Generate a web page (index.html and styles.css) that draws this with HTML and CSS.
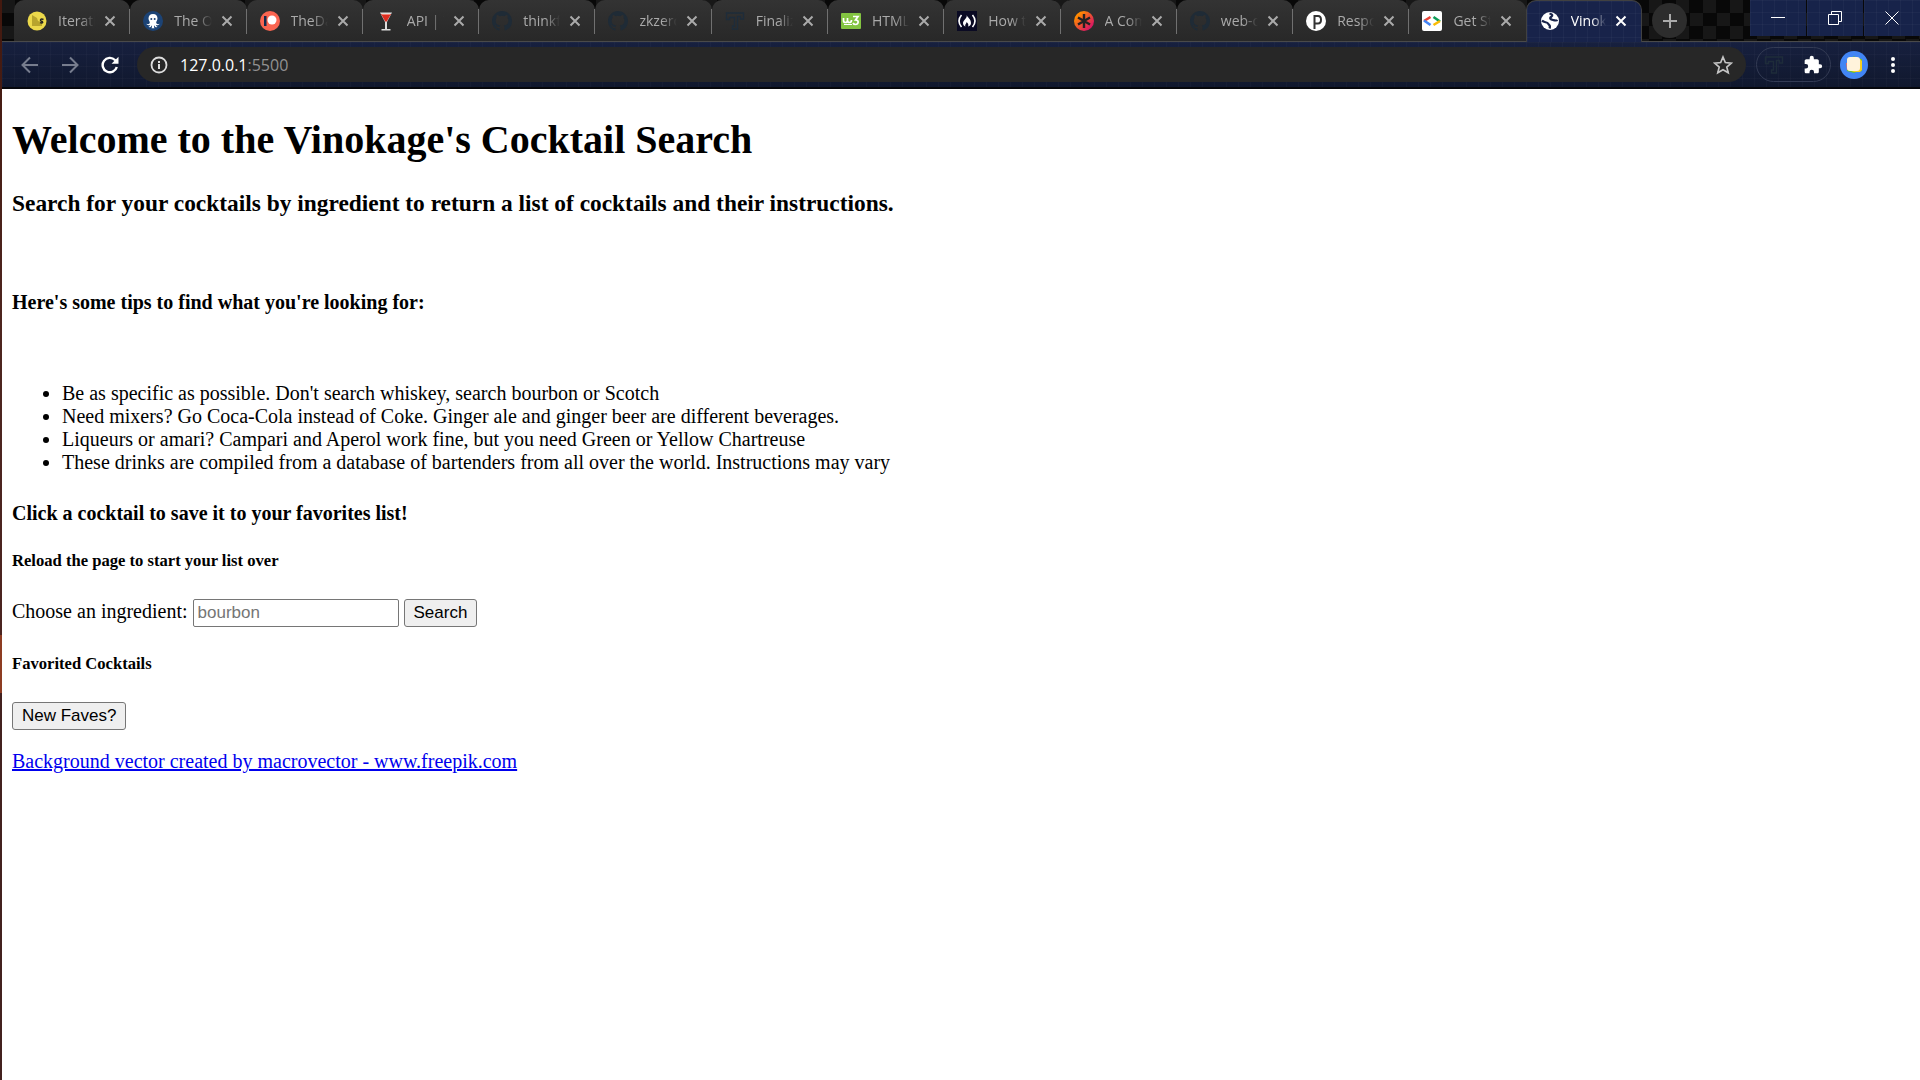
FILE: index.html
```html
<!DOCTYPE html>
<html lang="en">
<head>
<meta charset="utf-8">
<title>Vinokage's Cocktail Search</title>
<link rel="stylesheet" href="styles.css">
</head>
<body>
<svg class="defs" aria-hidden="true">
  <symbol id="close" viewBox="0 0 12 12"><path d="M1.5 1.5l9 9M10.500 1.500l-9 9" fill="none" stroke="currentColor" stroke-width="2"/></symbol>
  <symbol id="github" viewBox="0 0 16 16"><path fill="#1f2b36" d="M8 0C3.580 0 0 3.580 0 8c0 3.540 2.290 6.530 5.470 7.590.4.070.55-.17.55-.38v-1.490c-2.010.37-2.530-.49-2.690-.94-.09-.23-.48-.94-.82-1.130-.28-.15-.68-.52-.01-.53.63-.01 1.080.58 1.230.82.72 1.210 1.870.87 2.330.66.070-.52.280-.87.510-1.070-1.780-.2-3.640-.89-3.640-3.950 0-.87.31-1.590.82-2.150-.08-.2-.36-1.020.08-2.120 0 0 .67-.21 2.200.82a7.600 7.600 0 0 1 4 0c1.530-1.040 2.200-.82 2.200-.82.44 1.100.16 1.920.08 2.120.51.56.82 1.270.82 2.150 0 3.070-1.870 3.750-3.650 3.950.29.25.54.73.54 1.480v2.200c0 .21.15.46.55.38A8 8 0 0 0 16 8c0-4.420-3.580-8-8-8z"/></symbol>
  <symbol id="tee" viewBox="0 0 20 20"><path d="M1.500 2h17v6h-3V5.500h-3V18h-5v-3h2V6.500h-5V8.500h-3z" fill="none" stroke="currentColor" stroke-width="1.400"/></symbol>
</svg>
<div class="window">
  <header class="browser">
    <div class="strip">
      <div class="tabs">
        <div class="tab"><svg class="icon" viewBox="0 0 20 20"><circle cx="10" cy="10" r="9.500" fill="#ecd94b"/><path d="M5 4l5 3 1 3 4 1v4H5z" fill="#b8a52d"/><path d="M16.500 8.500c-3-1.500-4 1.200-2 1.700s1.500 2.600-1.500 1.400" fill="none" stroke="#222" stroke-width="1.400"/></svg><span class="title">Iterating</span><button class="close" aria-label="Close tab"><svg><use href="#close"/></svg></button></div>
        <div class="tab"><svg class="icon" viewBox="0 0 20 20"><circle cx="10" cy="10" r="10" fill="#1c4375"/><path d="M10 3c-3 0-4.500 2-4.500 4.500 0 2 1.500 3 1.300 4.300S5 13.500 3.500 12.800c.5 1.700 2.500 1.700 3.700.9-.2 1.500-1.200 2-2 2.100 1.500 1 3 .2 3.700-1.600.2 1.300.1 2.300-.5 3h3.200c-.6-.7-.7-1.700-.5-3 .7 1.800 2.200 2.600 3.700 1.600-.8-.1-1.800-.6-2-2.100 1.200.8 3.200.8 3.700-.9-1.500.7-3.100.3-3.300-1s1.300-2.300 1.300-4.300C14.500 5 13 3 10 3z" fill="#fff"/><circle cx="8.300" cy="8" r="1" fill="#1c4375"/><circle cx="11.700" cy="8" r="1" fill="#1c4375"/></svg><span class="title">The Odin</span><button class="close" aria-label="Close tab"><svg><use href="#close"/></svg></button></div>
        <div class="tab"><svg class="icon" viewBox="0 0 20 20"><circle cx="10" cy="10" r="10" fill="#fa6550"/><path d="M4 5h2.500v10H4z" fill="#122b4d"/><circle cx="12" cy="9" r="4.500" fill="#fff"/></svg><span class="title">TheDaily</span><button class="close" aria-label="Close tab"><svg><use href="#close"/></svg></button></div>
        <div class="tab"><svg class="icon" viewBox="0 0 20 20"><path d="M4 1.500h12L11 11v7h3.500v1.500h-9V18H9v-7z" fill="#ddd"/><path d="M5 3h10l-4.200 7.500H9.200z" fill="#dc2d20"/><path d="M6 3.500h8" stroke="#f58173"/></svg><span class="title">API | The</span><button class="close" aria-label="Close tab"><svg><use href="#close"/></svg></button></div>
        <div class="tab"><svg class="icon"><use href="#github"/></svg><span class="title">thinkful</span><button class="close" aria-label="Close tab"><svg><use href="#close"/></svg></button></div>
        <div class="tab"><svg class="icon"><use href="#github"/></svg><span class="title">zkzero/a</span><button class="close" aria-label="Close tab"><svg><use href="#close"/></svg></button></div>
        <div class="tab"><svg class="icon tee"><use href="#tee"/></svg><span class="title">Finalize</span><button class="close" aria-label="Close tab"><svg><use href="#close"/></svg></button></div>
        <div class="tab"><svg class="icon" viewBox="0 0 20 20"><rect y="2" width="20" height="16" rx="1" fill="#83c441"/><path d="M2.500 7v2.500q0 2 2 2T6.500 9V7v2.500q0 2 2 2t2-2.500M12 5.500h5L14.500 9c4 0 3 4.500 0 4.500-1.500 0-2-.5-2.500-1.500" fill="none" stroke="#fff" stroke-width="1.700"/><path d="M3 13.500h8" stroke="#fff"/></svg><span class="title">HTML C</span><button class="close" aria-label="Close tab"><svg><use href="#close"/></svg></button></div>
        <div class="tab"><svg class="icon" viewBox="0 0 20 20"><path d="M0 0h20v20H0z" fill="#0a0a23"/><path d="M4.500 4q-5 6 0 12M15.500 4q5 6 0 12" fill="none" stroke="#fff" stroke-width="1.600"/><path d="M9.500 4c1.500 3-3.500 5-3.500 8 0 2 1 3 2.500 3.500-1-2 1-2.500 1-4.500 1.500 1 2.500 3 1.500 4.500 2-.5 3-1.700 3-3.500 0-4-3-5-4.500-8z" fill="#fff"/></svg><span class="title">How to</span><button class="close" aria-label="Close tab"><svg><use href="#close"/></svg></button></div>
        <div class="tab"><svg class="icon" viewBox="0 0 20 20"><linearGradient id="star-fill" x1="0" y1="0" x2="1" y2="1"><stop offset=".2" stop-color="#ff8a00"/><stop offset=".8" stop-color="#da1b60"/></linearGradient><circle cx="10" cy="10" r="10" fill="url(#star-fill)"/><path d="M10 3v14M4 6.500l12 7M16 6.500l-12 7" stroke="#222" stroke-width="2.400"/></svg><span class="title">A Comp</span><button class="close" aria-label="Close tab"><svg><use href="#close"/></svg></button></div>
        <div class="tab"><svg class="icon"><use href="#github"/></svg><span class="title">web-dev</span><button class="close" aria-label="Close tab"><svg><use href="#close"/></svg></button></div>
        <div class="tab"><svg class="icon" viewBox="0 0 20 20"><circle cx="10" cy="10" r="10" fill="#fff"/><path d="M8.500 18V5h3.500c4 0 4 7.500 0 7.500H8.500" fill="none" stroke="#333" stroke-width="2"/></svg><span class="title">Respons</span><button class="close" aria-label="Close tab"><svg><use href="#close"/></svg></button></div>
        <div class="tab"><svg class="icon" viewBox="0 0 20 20"><rect width="20" height="20" rx="2" fill="#fff"/><g fill="none" stroke-width="2.600"><path d="M8.500 6L2 10" stroke="#ea4335"/><path d="M2 9.500L8.500 14" stroke="#4285f4"/><path d="M11.500 6L18 10.500" stroke="#0f9d58"/><path d="M18 10l-6.500 4" stroke="#fbbc04"/></g></svg><span class="title">Get Star</span><button class="close" aria-label="Close tab"><svg><use href="#close"/></svg></button></div>
        <div class="tab active"><svg class="icon" viewBox="0 0 20 20"><circle cx="10" cy="10" r="9" fill="#fff"/><path d="M9.500 2.500c3.500 1 3.500 2 1.500 3.500s0 2.500 2 3 3.500 1 4.500 0M2 9.500c2 2.500 5 1 6 3s3 1.500 1.500 5" fill="none" stroke="#18234a" stroke-width="2.200"/></svg><span class="title">Vinokage</span><button class="close" aria-label="Close tab"><svg><use href="#close"/></svg></button></div>
      </div>
      <button class="new-tab" aria-label="New tab"><svg viewBox="0 0 16 16"><path d="M8 1v14M1 8h14" stroke="currentColor" stroke-width="2"/></svg></button>
      <div class="controls">
        <button aria-label="Minimize"><svg viewBox="0 0 14 14"><path d="M0 6.500h14"/></svg></button>
        <button aria-label="Restore"><svg viewBox="0 0 14 14"><path d="M.5 3.500h10v10H.5zM3.500 3.500v-3h10v10h-3"/></svg></button>
        <button aria-label="Close"><svg viewBox="0 0 14 14"><path d="M.5.5l13 13M13.500.5l-13 13"/></svg></button>
      </div>
    </div>
    <div class="toolbar">
      <nav class="nav">
        <button class="dim" aria-label="Back"><svg viewBox="0 0 18 18"><path d="M17 9H2M9 1.500L1.500 9 9 16.500"/></svg></button>
        <button class="dim" aria-label="Forward"><svg viewBox="0 0 18 18"><path d="M1 9h15M9 1.500L16.500 9 9 16.500"/></svg></button>
        <button aria-label="Reload"><svg viewBox="0 0 18 18"><path d="M15.800 11A7.200 7.200 0 1 1 14 4l2 2" stroke-width="2.400"/><path d="M17.500.8v7h-7z" fill="#fff" stroke="none"/></svg></button>
      </nav>
      <div class="address">
        <svg class="info" viewBox="0 0 18 18"><circle cx="9" cy="9" r="7.500" fill="none" stroke="#ddd" stroke-width="1.800"/><path d="M8 8h2v5H8zM8 5h2v2H8z" fill="#ddd"/></svg>
        <span class="url">127.0.0.1<span class="port">:5500</span></span>
        <button class="star" aria-label="Bookmark"><svg viewBox="0 0 18 18"><path d="M9 1.800l2.100 5 5.400.5-4.100 3.500 1.300 5.200L9 13.200 4.300 16l1.300-5.200L1.500 7.300l5.400-.5z" fill="none" stroke="#c4c4c4" stroke-width="1.500"/></svg></button>
      </div>
      <div class="extensions">
        <svg class="tee" viewBox="0 0 20 20"><use href="#tee"/></svg>
        <svg class="puzzle" viewBox="0 0 24 24"><path fill="#fff" d="M20.500 11H19V7c0-1.100-.9-2-2-2h-4V3.500a2.500 2.500 0 0 0-5 0V5H4c-1.100 0-2 .9-2 2v3.800h1.500a2.700 2.700 0 0 1 0 5.400H2V20c0 1.100.9 2 2 2h3.800v-1.500a2.700 2.700 0 0 1 5.400 0V22H17c1.100 0 2-.9 2-2v-4h1.500a2.500 2.500 0 0 0 0-5z"/></svg>
      </div>
      <svg class="avatar" viewBox="0 0 28 28"><circle cx="14" cy="14" r="14" fill="#4285f4"/><path d="M7 8l5-1 2-2 2 2 6 1v12l-6 1-2 1-7-2z" fill="#62c531"/><path d="M9 8h11l2 2v9l-2 2h-6l-6-2z" fill="#f4ce22"/><path d="M6 12h3v7H7z" fill="#ef705d"/><rect x="7" y="6" width="13" height="14" rx="3" fill="#fff3db"/></svg>
      <button class="menu" aria-label="Menu"><svg viewBox="0 0 6 18"><circle cx="3" cy="3" r="2"/><circle cx="3" cy="9" r="2"/><circle cx="3" cy="15" r="2"/></svg></button>
    </div>
  </header>
  <main class="page">
    <h1>Welcome to the Vinokage's Cocktail Search</h1>
    <h3>Search for your cocktails by ingredient to return a list of cocktails and their instructions.</h3>
    <h4 class="tips">Here's some tips to find what you're looking for:</h4>
    <ul>
      <li>Be as specific as possible. Don't search whiskey, search bourbon or Scotch</li>
      <li>Need mixers? Go Coca-Cola instead of Coke. Ginger ale and ginger beer are different beverages.</li>
      <li>Liqueurs or amari? Campari and Aperol work fine, but you need Green or Yellow Chartreuse</li>
      <li>These drinks are compiled from a database of bartenders from all over the world. Instructions may vary</li>
    </ul>
    <h4>Click a cocktail to save it to your favorites list!</h4>
    <h5>Reload the page to start your list over</h5>
    <form class="search">
      <label for="ingredient">Choose an ingredient:</label>
      <input id="ingredient" type="text" placeholder="bourbon">
      <button class="push" type="button">Search</button>
    </form>
    <h5>Favorited Cocktails</h5>
    <button class="push" type="button">New Faves?</button>
    <p><a href="#">Background vector created by macrovector - www.freepik.com</a></p>
  </main>
</div>
</body>
</html>
```
FILE: styles.css
```css
* { box-sizing: border-box; }
body { margin: 0; background: #fff; }
svg { display: block; }
button { font: inherit; }
.defs { position: absolute; width: 0; height: 0; }

/* desktop shows through along the left edge of the window */
.window {
  min-height: 100vh;
  padding-left: 2px;
  display: flex;
  flex-direction: column;
  background: linear-gradient(#43190f, #4d251f 30%, #4a2420 58.800%, #8d3c22 58.800%, #8d3c22 64.200%, #43211f 64.200%, #43211f);
}

.browser {
  font-family: "Open Sans", "Noto Sans", sans-serif;
  color: #fff;
  border-bottom: 2px solid #06070c;
  background: #131c38;
}
.browser button {
  display: grid;
  place-items: center;
  padding: 0;
  border: 0;
  background: none;
  color: inherit;
}

.strip {
  display: flex;
  align-items: flex-start;
  height: 42px;
  padding-left: 12px;
  border-bottom: 1px solid #4a4a4a;
  background:
    conic-gradient(#080808 25%, #171717 0 50%, #080808 0 75%, #171717 0) 0 0 / 27px 26px;
}
.tabs {
  flex: 1;
  max-width: 1628px;
  display: grid;
  grid-template-columns: repeat(14, minmax(0, 1fr));
}
.tab {
  height: 41px;
  display: flex;
  align-items: center;
  padding: 0 13px;
  border-radius: 10px 10px 0 0;
  background: linear-gradient(#333, #282828);
  color: #aaa;
  position: relative;
}
.tab::after {
  content: "";
  position: absolute;
  right: 0;
  top: 9px;
  width: 1px;
  height: 25px;
  background: #707070;
}
.tab.active {
  height: 42px;
  padding-bottom: 2px;
  border: 1px solid #414141;
  border-bottom: 0;
  background:
    repeating-linear-gradient(90deg, #ffffff08 0 1px, transparent 1px 12px),
    repeating-linear-gradient(#ffffff08 0 1px, transparent 1px 12px),
    #18234a;
  color: #fff;
}
.tab.active::after, .tab:nth-last-child(2)::after { display: none; }
.icon { flex: none; width: 20px; height: 20px; }
.tee { color: #1e2c3a; }
.title {
  flex: 1;
  min-width: 0;
  margin: 0 8px 0 11px;
  overflow: hidden;
  white-space: nowrap;
  font-size: 14px;
  line-height: 20px;
  mask-image: linear-gradient(90deg, #000 60%, transparent);
}
.close { flex: none; width: 14px; height: 20px; }
.close svg { width: 12px; height: 12px; }

.browser .new-tab {
  flex: none;
  width: 35px;
  height: 35px;
  margin: 3px 0 0 10px;
  border-radius: 50%;
  background: #2d2d2d;
  color: #aaa;
}
.new-tab svg { width: 16px; height: 16px; }
.controls { display: flex; gap: 1px; margin-left: auto; }
.controls button {
  width: 56px;
  height: 36px;
  background:
    repeating-linear-gradient(90deg, #ffffff08 0 1px, transparent 1px 12px),
    repeating-linear-gradient(#ffffff08 0 1px, transparent 1px 12px),
    #17234a;
}
.controls svg { width: 14px; height: 14px; fill: none; stroke: #fff; }

.toolbar {
  display: flex;
  align-items: center;
  height: 45px;
  padding: 0 24px 0 19px;
  background:
    repeating-linear-gradient(90deg, #ffffff06 0 1px, transparent 1px 12px),
    repeating-linear-gradient(#ffffff06 0 1px, transparent 1px 12px),
    linear-gradient(#17203f, #10182e);
}
.nav { display: flex; gap: 22px; margin-right: 18px; }
.nav button { width: 18px; height: 18px; }
.nav svg { width: 18px; height: 18px; fill: none; stroke: #fff; stroke-width: 2; }
.nav .dim svg { stroke: #777d8e; }
.address {
  flex: 1;
  display: flex;
  align-items: center;
  height: 35px;
  padding: 0 13px;
  border-radius: 18px;
  background: #272727;
}
.info { width: 18px; height: 18px; margin-right: 12px; }
.url { flex: 1; font-size: 16px; line-height: 24px; }
.port { color: #929292; }
.star svg { width: 20px; height: 20px; }
.extensions {
  display: flex;
  align-items: center;
  justify-content: space-between;
  width: 75px;
  height: 35px;
  margin: 0 9px 0 10px;
  padding: 0 7px;
  border: 1px solid #333b54;
  border-radius: 18px;
}
.extensions .tee { width: 20px; height: 20px; }
.puzzle { width: 20px; height: 20px; }
.avatar { width: 28px; height: 28px; margin-right: 22px; }
.menu svg { width: 6px; height: 18px; fill: #fff; }

.page {
  flex: 1;
  padding: 28px 10px 40px;
  background: #fff;
  color: #000;
  font-family: "Liberation Serif", "Times New Roman", serif;
  font-size: 20px;
  line-height: 23px;
}
.page h1 { margin: 0; font-size: 40px; line-height: 46px; }
.page h3 { margin: 27px 0 0; line-height: 27px; }
.page h4 { margin: 28px 0 0; }
.page .tips { margin: 74px 0 68px; }
.page h5 { margin: 26px 0 28px; line-height: 20px; }
.page ul { margin: 0; padding-left: 50px; }
.page p { margin: 20px 0 0; }
.page a { color: #0000ee; }
.search {
  display: flex;
  align-items: baseline;
  gap: 5px;
  margin-bottom: 27px;
}
.search input {
  width: 206px;
  height: 28px;
  padding: 1px 4px;
  border: 1px solid #767676;
  border-radius: 2px;
  font: 17px "Liberation Sans", Arial, sans-serif;
}
.search input::placeholder { color: #757575; }
.push {
  display: block;
  height: 28px;
  padding: 0 9px;
  border: 1px solid #767676;
  border-radius: 3px;
  background: #efefef;
  color: #000;
  font: 17px "Liberation Sans", Arial, sans-serif;
}
```
